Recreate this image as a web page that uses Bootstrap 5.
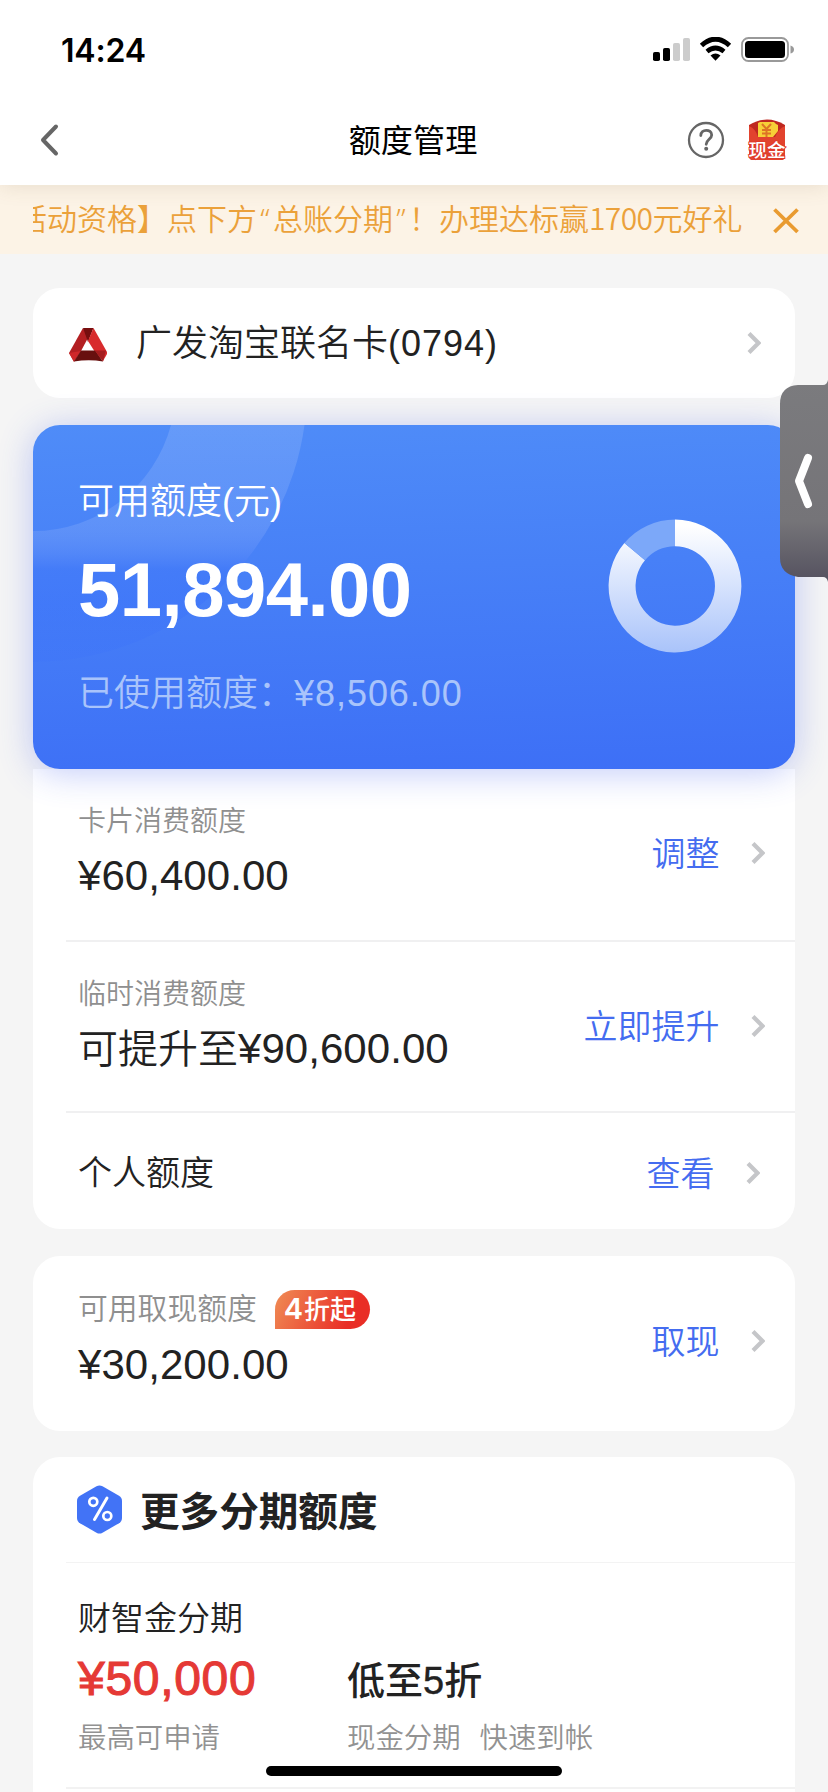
<!DOCTYPE html>
<html lang="zh-CN">
<head>
<meta charset="utf-8">
<meta name="viewport" content="width=device-width, initial-scale=1">
<title>额度管理</title>
<link href="https://cdn.jsdelivr.net/npm/bootstrap@5.3.0/dist/css/bootstrap.min.css" rel="stylesheet">
<style>
html,body{height:1792px;overflow:hidden}
body{background:#f5f5f5;color:#222;font-family:"Noto Sans CJK SC",sans-serif;font-weight:350;width:828px}
svg{display:block;flex:none}
.num{font-family:"Liberation Sans",sans-serif}
.screen{height:1792px;overflow:hidden}
.status{height:95px;padding:0 33px 0 61px}
.clock{font:600 32px/40px Inter,sans-serif;color:#000;padding-top:6px;letter-spacing:-.2px}
.topbar{height:90px;padding:0 41px 0 39px;background:#fff;display:grid;grid-template-columns:1fr auto 1fr}
.topbar h1{font-size:32.2px;line-height:40px;color:#000;font-weight:400;padding-bottom:5px}
.head{background:#fff;box-shadow:0 0 20px rgba(120,100,60,.17);z-index:2}
.notice{height:69px;background:#fcf3e6;color:#eba13a;padding-left:33px;padding-right:28px}
.ticker{width:712px;overflow:hidden;font-size:30px;line-height:50px;white-space:nowrap;padding-bottom:4px}
.ticker>span{display:inline-block;margin-left:-16px}
.ticker i{display:inline-block;width:16px;font-style:normal;font-family:"Noto Sans",sans-serif;text-align:center}
.ticker u{text-decoration:none;letter-spacing:-.6px}
.wrap{padding:34px 33px 0}
.panel{background:#fff;border:0;border-radius:27px}
.pick{height:110px;padding:0 34px 0 36px;font-size:36px;margin-bottom:27px}
.pick .txt{line-height:50px;padding-bottom:2px;margin-left:29px}
.pick .num{letter-spacing:1px}
.hero{height:344px;border-radius:27px;color:#fff;background:linear-gradient(178deg,#4f8cf8 0,#4780f7 42%,#3d6ff6 100%);box-shadow:0 4px 34px rgba(64,92,235,.32);padding:0 53px 0 45px;z-index:1}
.hero>svg.deco{position:absolute;left:0;top:0}
.hero .t1{font-size:36px;line-height:50px;margin-top:48px}
.hero .big{font-size:76px;line-height:80px;margin-top:23px;font-weight:700;letter-spacing:-.5px;margin-left:0}
.hero .t2{font-size:36px;line-height:50px;margin-top:35px;color:#a9c4fb}
.hero .t2 .num{letter-spacing:.95px}
.under{margin-bottom:27px;border-radius:0 0 27px 27px}
.item{margin-left:33px;padding:0 30px 0 12px;height:173px;border-bottom:2px solid #f0f0f1}
.item.short{height:116px;border:0;padding-right:35px}
.item .left{padding-top:30px}
.label{font-size:28px;line-height:40px;color:#8f8f8f}
.amount{font-size:40px;line-height:56px;margin-top:6px;color:#222}
.amount .num{font-size:42px;letter-spacing:.05px}
.act{margin-top:62px;height:44px;color:#446cf0;font-size:34px}
.act span{line-height:44px;padding-bottom:3px;margin-right:31.500px}
.cash{height:174.5px;margin-bottom:26.5px}
.cash .item{border:0}
.cash .label{font-size:29.800px}
.cash .amount{margin-top:8px}
.cash .act{margin-top:63px}
.tag4{width:95px;height:39px;margin-left:18px;margin-top:4px;margin-bottom:-3px;border-radius:20px 20px 20px 0;background:linear-gradient(115deg,#ef8652 5%,#e92e26 78%);color:#fff;font-size:26px;font-weight:500;line-height:36px;padding-left:9px}
.tag4 b{font:600 29px/36px Inter,sans-serif;margin-right:1px}
.more{height:340px;border-radius:27px 27px 0 0}
.more .ttl{margin-left:33px;height:106px;border-bottom:1.5px solid #f3f3f3;padding-left:11px;font-size:39.6px;font-weight:700}
.more .ttl span{line-height:56px;padding-bottom:2px;margin-left:18px}
.plan{margin-left:33px;padding:30px 0 0 12px;height:226px;border-bottom:2px solid #f2f2f2}
.plan .name{font-size:33px;line-height:46px}
.plan .c1{width:269px}
.plan .v{height:56px;margin-top:12px;line-height:56px}
.plan .red{color:#e53935;font-size:48px;letter-spacing:.7px;-webkit-text-stroke:1.1px #e53935}
.plan .off{font-size:38px;line-height:54px;font-weight:500}
.plan .off .num{-webkit-text-stroke:.4px #222}
.plan .s{font-size:28.4px;line-height:40px;color:#929292;margin-top:9px}
.drawer{position:absolute;left:780px;top:380px;z-index:5}
.homebar{position:absolute;left:266px;top:1766px;width:296px;height:10px;border-radius:5px;background:#000}
</style>
</head>
<body>
<div class="screen position-relative">
<header class="head position-relative">
  <div class="status d-flex justify-content-between align-items-center">
    <div class="clock">14:24</div>
    <svg width="142" height="26" viewBox="0 0 142 26" style="margin-top:4px">
      <rect x="0" y="15" width="7" height="9" rx="1.8"/><rect x="10" y="11" width="7" height="13" rx="1.8"/>
      <g fill="#ccc"><rect x="20" y="6" width="7" height="18" rx="1.8"/><rect x="30" y="1" width="7" height="23" rx="1.8"/></g>
      <g fill="none" stroke="#000" stroke-width="5"><path d="M48.500 8.500Q62.500 -4 76.500 8.500"/><path d="M54 14.500Q62.500 7.500 71 14.500" stroke-width="4.600"/></g>
      <path d="M57.500 18.500Q62.500 14.500 67.500 18.500L62.500 23.800Z"/>
      <rect x="89" y="1" width="46" height="23" rx="6.500" fill="none" stroke="#999" stroke-width="1.800"/><rect x="92" y="4" width="40" height="17" rx="3.500"/>
      <path d="M137.500 8.500Q141 9.500 141 12.500T137.500 16.500Z" fill="#999"/>
    </svg>
  </div>
  <nav class="topbar align-items-center">
    <svg width="22" height="34" viewBox="0 0 22 34"><path d="M17 3.500L4 17L17 30.500" fill="none" stroke="#666" stroke-width="4" stroke-linecap="round" stroke-linejoin="round"/></svg>
    <h1 class="m-0">额度管理</h1>
    <div class="d-flex justify-content-end align-items-center">
      <svg width="38" height="38" viewBox="0 0 38 38" style="margin-right:22px"><circle cx="19" cy="19" r="17" fill="none" stroke="#666" stroke-width="2.300"/><path d="M13.800 14.500C13.800 7.500 24.700 7.800 24.700 14C24.700 18 19.200 18.600 19.200 23.300" fill="none" stroke="#666" stroke-width="2.800" stroke-linecap="round"/><circle cx="19.200" cy="27.800" r="2" fill="#666"/></svg>
      <svg width="40" height="42" viewBox="0 0 40 42"><path d="M2 6Q20 -5 38 6V37Q38 41 34 41H6Q2 41 2 37Z" fill="#bf2820"/><path d="M2 7Q9 10 11 18H28Q31 10 38 7V37Q38 41 34 41H6Q2 41 2 37Z" fill="#e2432e"/><path d="M11 4L13 3H27L29 5L31 6V12L26 18H11Z" fill="#f7cf37"/><path d="M15 5L19.500 10L24 5M19.500 10V18M15 11H24M15 14.500H24" stroke="#dd7425" stroke-width="2" fill="none"/><text x="20" y="37.500" text-anchor="middle" font-size="18.500" font-weight="500" fill="#fff" stroke="#df3b2b" stroke-width="2" paint-order="stroke">现金</text></svg>
    </div>
  </nav>
</header>
<div class="notice d-flex align-items-center justify-content-between">
  <div class="ticker"><span>活动资格】点下方<i>“</i>总账分期<i>”</i>！办理达标赢<u>1700</u>元好礼</span></div>
  <svg width="28" height="28" viewBox="0 0 28 28"><path d="M2.500 3.500L25.500 26M25.500 3.500L2.500 26" stroke="#e99b31" stroke-width="3.800"/></svg>
</div>
<main class="wrap">
  <section class="panel pick d-flex align-items-center">
    <svg width="38" height="34" viewBox="0 0 38 34" class="mt-1"><path d="M14 0L0 25L5 34L12 23L19.500 9Z" fill="#b31f22"/><path d="M14 0H24.500L19 14Z" fill="#760e0f"/><path d="M24.500 0L19 13L26 24L34 33L38.500 25Z" fill="#d82b2d"/><path d="M0 25L5 33.500L12 23Z" fill="#cf282a"/><path d="M12 22.500H26L34 33.500Q20 31 5 33.500Z" fill="#68100f"/><path d="M26 22.500H37L34 33.500Z" fill="#a61d1f"/></svg>
    <div class="txt flex-grow-1">广发淘宝联名卡<span class="num">(0794)</span></div>
    <svg width="14" height="22" viewBox="0 0 14 22"><path d="M2 1.500L11.500 11L2 20.500" fill="none" stroke="#c5c6c9" stroke-width="4.200"/></svg>
  </section>
  <section class="hero position-relative d-flex justify-content-between">
    <svg class="deco" width="300" height="344" viewBox="0 0 300 344"><defs><linearGradient id="ring" x1="0" y1="0" x2="0" y2="240" gradientUnits="userSpaceOnUse"><stop offset="0" stop-color="#fff" stop-opacity=".13"/><stop offset=".35" stop-color="#fff" stop-opacity=".11"/><stop offset=".6" stop-color="#3c70fa" stop-opacity=".3"/><stop offset=".75" stop-color="#3268ff" stop-opacity=".22"/><stop offset="1" stop-color="#3268ff" stop-opacity=".1"/></linearGradient></defs><path d="M271.500 0A274 274 0 0 1 0 237V106A143 143 0 0 0 138 0Z" fill="url(#ring)"/></svg>
    <div class="position-relative">
      <div class="t1">可用额度<span class="num">(</span>元<span class="num">)</span></div>
      <div class="big num">51,894.00</div>
      <div class="t2">已使用额度：<span class="num">¥8,506.00</span></div>
    </div>
    <svg width="134" height="134" viewBox="0 0 134 134" style="margin-top:94px"><defs><linearGradient id="dn" x1="0" y1="0" x2="0" y2="134" gradientUnits="userSpaceOnUse"><stop offset=".05" stop-color="#fff"/><stop offset="1" stop-color="#a9c3fa"/></linearGradient></defs>
      <path d="M67 .6A66.400 66.400 0 1 1 16.400 24L37 41.300A39.700 39.700 0 1 0 67 27.300Z" fill="url(#dn)"/><path d="M67 .6A66.400 66.400 0 0 0 16.400 24L37 41.300A39.700 39.700 0 0 1 67 27.300Z" fill="#7ca8f9"/></svg>
  </section>
  <section class="panel under">
    <div class="item d-flex justify-content-between">
      <div class="left"><div class="label">卡片消费额度</div><div class="amount"><span class="num">¥60,400.00</span></div></div>
      <div class="act d-flex align-items-center"><span>调整</span><svg width="14" height="22" viewBox="0 0 14 22"><path d="M2 1.500L11.500 11L2 20.500" fill="none" stroke="#c5c6c9" stroke-width="4.200"/></svg></div>
    </div>
    <div class="item d-flex justify-content-between" style="height:171px">
      <div class="left"><div class="label">临时消费额度</div><div class="amount">可提升至<span class="num">¥90,600.00</span></div></div>
      <div class="act d-flex align-items-center"><span>立即提升</span><svg width="14" height="22" viewBox="0 0 14 22"><path d="M2 1.500L11.500 11L2 20.500" fill="none" stroke="#c5c6c9" stroke-width="4.200"/></svg></div>
    </div>
    <div class="item short d-flex justify-content-between align-items-center">
      <div style="font-size:34px;padding-bottom:1px">个人额度</div>
      <div class="act mt-1 d-flex align-items-center"><span>查看</span><svg width="14" height="22" viewBox="0 0 14 22"><path d="M2 1.500L11.500 11L2 20.500" fill="none" stroke="#c5c6c9" stroke-width="4.200"/></svg></div>
    </div>
  </section>
  <section class="panel cash">
    <div class="item d-flex justify-content-between">
      <div class="left"><div class="d-flex align-items-center"><div class="label">可用取现额度</div><div class="tag4"><b>4</b>折起</div></div><div class="amount"><span class="num">¥30,200.00</span></div></div>
      <div class="act d-flex align-items-center"><span>取现</span><svg width="14" height="22" viewBox="0 0 14 22"><path d="M2 1.500L11.500 11L2 20.500" fill="none" stroke="#c5c6c9" stroke-width="4.200"/></svg></div>
    </div>
  </section>
  <section class="panel more">
    <div class="ttl d-flex align-items-center">
      <svg width="45" height="49" viewBox="0 0 45 49"><path d="M19.500 1.300Q22.500 -.4 25.500 1.300L42 10.800Q45 12.600 45 16V33Q45 36.400 42 38.200L25.500 47.700Q22.500 49.400 19.500 47.700L3 38.200Q0 36.400 0 33V16Q0 12.600 3 10.800Z" fill="#4273f6"/><g fill="none" stroke="#fff" stroke-width="2.700"><circle cx="16.300" cy="16.800" r="4"/><circle cx="30.300" cy="31" r="4"/><path d="M30 13L17.500 34.500" stroke-width="3" stroke-linecap="round"/></g></svg>
      <span>更多分期额度</span>
    </div>
    <div class="plan">
      <div class="name">财智金分期</div>
      <div class="d-flex">
        <div class="c1"><div class="v num red">¥50,000</div><div class="s">最高可申请</div></div>
        <div><div class="v off">低至<span class="num">5</span>折</div><div class="s">现金分期<span style="margin-left:19px">快速到帐</span></div></div>
      </div>
    </div>
  </section>
</main>
<svg class="drawer" width="48" height="202" viewBox="0 0 48 202"><defs><linearGradient id="dr" x1="0" y1="0" x2="0" y2="1"><stop offset="0" stop-color="#7b7b7e"/><stop offset=".7" stop-color="#757478"/><stop offset="1" stop-color="#54515f"/></linearGradient></defs><path d="M48 0Q47 5 43 5H18Q0 6 0 24V178Q0 194 18 197H43Q47 197 48 202Z" fill="url(#dr)"/><path d="M28 78L19 101L28 124" fill="none" stroke="#fff" stroke-width="8" stroke-linecap="round" stroke-linejoin="round"/></svg>
<div class="homebar"></div>
</div>
<script src="https://cdn.jsdelivr.net/npm/bootstrap@5.3.0/dist/js/bootstrap.bundle.min.js"></script>
</body>
</html>
